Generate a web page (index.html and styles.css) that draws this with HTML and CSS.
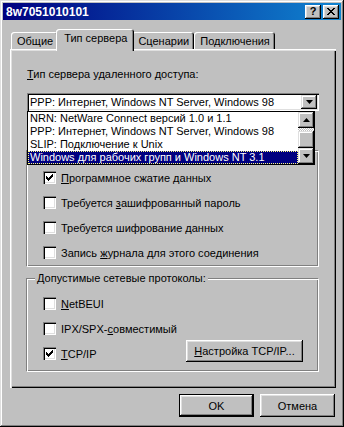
FILE: index.html
```html
<!DOCTYPE html>
<html>

<head>
  <meta charset="utf-8">
  <meta name="viewport" content="width=device-width">
  <title>8w7051010101</title>
  <link rel="stylesheet" href="styles.css">
</head>

<body>
  <div class="window">
    <div class="titlebar">
      <span class="title">8w7051010101</span>
      <div class="tbtns">
        <div class="tbtn help">?</div>
        <div class="tbtn">
          <svg width="8" height="7" viewBox="0 0 8 7" shape-rendering="crispEdges">
            <path d="M0 0h2v1h-2z M6 0h2v1h-2z M1 1h2v1h-2z M5 1h2v1h-2z M2 2h4v1h-4z M3 3h2v1h-2z M2 4h4v1h-4z M1 5h2v1h-2z M5 5h2v1h-2z M0 6h2v1h-2z M6 6h2v1h-2z" fill="#000"/>
          </svg>
        </div>
      </div>
    </div>

    <div class="dialog">
      <div class="tabs">
        <div class="tab">Общие</div>
        <div class="tab active">Тип сервера</div>
        <div class="tab">Сценарии</div>
        <div class="tab">Подключения</div>
      </div>

      <div class="panel">
        <div class="label"><u>Т</u>ип сервера удаленного доступа:</div>

        <div class="combo-wrap">
          <div class="combo">
            <span class="combo-text">PPP: Интернет, Windows NT Server, Windows 98</span>
            <div class="sbtn drop">
              <svg width="7" height="4" viewBox="0 0 7 4"><polygon points="0,0 7,0 3.5,4" fill="#000"/></svg>
            </div>
          </div>

          <div class="list">
            <div class="items">
              <div class="item">NRN: NetWare Connect версий 1.0 и 1.1</div>
              <div class="item">PPP: Интернет, Windows NT Server, Windows 98</div>
              <div class="item">SLIP: Подключение к Unix</div>
              <div class="item selected">Windows для рабочих групп и Windows NT 3.1</div>
            </div>
            <div class="scrollbar">
              <div class="sbtn">
                <svg width="7" height="4" viewBox="0 0 7 4"><polygon points="0,4 7,4 3.5,0" fill="#000"/></svg>
              </div>
              <div class="track"></div>
              <div class="sbtn thumb"></div>
              <div class="sbtn">
                <svg width="7" height="4" viewBox="0 0 7 4"><polygon points="0,0 7,0 3.5,4" fill="#000"/></svg>
              </div>
            </div>
          </div>
        </div>

        <div class="group options">
          <div class="row">
            <span class="check on"></span>
            <span><u>П</u>рограммное сжатие данных</span>
          </div>
          <div class="row">
            <span class="check"></span>
            <span>Требуется <u>з</u>ашифрованный пароль</span>
          </div>
          <div class="row">
            <span class="check"></span>
            <span>Требуется шифрование данных</span>
          </div>
          <div class="row">
            <span class="check"></span>
            <span>Запись <u>ж</u>урнала для этого соединения</span>
          </div>
        </div>

        <fieldset class="group protocols">
          <legend>Допустимые сетевые протоколы:</legend>
          <div class="row">
            <span class="check"></span>
            <span><u>N</u>etBEUI</span>
          </div>
          <div class="row">
            <span class="check"></span>
            <span>IPX/SPX-<u>с</u>овместимый</span>
          </div>
          <div class="row">
            <span class="check on"></span>
            <span><u>T</u>CP/IP</span>
            <div class="button setup"><span><u>Н</u>астройка TCP/IP...</span></div>
          </div>
        </fieldset>
      </div>

      <div class="actions">
        <div class="button default">OK</div>
        <div class="button">Отмена</div>
      </div>
    </div>
  </div>

  <script>
    // checkmark glyph for every ticked box
    let mark = '<svg width="13" height="13" viewBox="0 0 13 13" shape-rendering="crispEdges"><path d="M9 3h1v1h-1z M8 4h2v1h-2z M3 5h1v1h-1z M7 5h3v1h-3z M3 6h2v1h-2z M6 6h3v1h-3z M3 7h5v1h-5z M4 8h3v1h-3z M5 9h1v1h-1z" fill="#000"/></svg>';
    for (let box of document.querySelectorAll('.check.on')) {
      box.innerHTML = mark;
    }
  </script>
</body>

</html>
```

FILE: styles.css
```css
* {
  box-sizing: border-box;
}

body {
  margin: 0;
  background-color: #c0c0c0;
  font-family: "Liberation Sans", Arial, sans-serif;
  font-size: 11px;
  color: #000;
}

u {
  text-decoration-thickness: 1px;
  text-underline-offset: 1px;
}

.window {
  width: 344px;
  height: 427px;
  padding: 3px;
  display: flex;
  flex-direction: column;
  background-color: #c0c0c0;
  box-shadow: inset -1px -1px #000, inset 1px 1px #dfdfdf, inset -2px -2px #808080, inset 2px 2px #fff;
}

.titlebar {
  height: 17px;
  padding: 0 2px 0 3px;
  display: flex;
  align-items: center;
  justify-content: space-between;
  background: linear-gradient(90deg, #000080, #1084d0);
}

.title {
  color: white;
  font-weight: bold;
  font-size: 12px;
}

.tbtns {
  display: flex;
  gap: 2px;
}

.tbtn {
  width: 16px;
  height: 14px;
  display: flex;
  align-items: center;
  justify-content: center;
  background-color: #c0c0c0;
  box-shadow: inset -1px -1px #000, inset 1px 1px #fff, inset -2px -2px #808080, inset 2px 2px #dfdfdf;
}

.tbtn.help {
  font-weight: bold;
  font-size: 11px;
  line-height: 14px;
  padding-bottom: 1px;
}

.dialog {
  flex-grow: 1;
  display: flex;
  flex-direction: column;
  padding: 0 5px 0 7px;
}

/* tab strip */
.tabs {
  margin-top: 9px;
  display: flex;
  align-items: flex-end;
  padding-left: 1px;
}

.tab {
  height: 17px;
  padding: 2px 5px 0 6px;
  border-radius: 3px 3px 0 0;
  line-height: 14px;
  white-space: nowrap;
  background-color: #c0c0c0;
  box-shadow: inset 1px 1px #fff, inset -1px 0 #000, inset -2px 0 #808080;
}

.tab.active {
  position: relative;
  z-index: 1;
  height: 22px;
  margin: 0 -2px -2px;
  padding: 2px 7px 0 8px;
}

.panel {
  height: 339px;
  padding: 19px 17px 0 16px;
  background-color: #c0c0c0;
  box-shadow: inset 1px 1px #fff, inset 2px 2px #dfdfdf, inset -1px -1px #000, inset -2px -2px #808080;
}

.label {
  line-height: 13px;
  margin-left: 1px;
}

/* combo box with its open list */
.combo-wrap {
  position: relative;
  margin: 12px 0 0 1px;
}

.combo {
  height: 18px;
  padding: 2px 2px 2px 3px;
  display: flex;
  align-items: center;
  justify-content: space-between;
  background-color: white;
  box-shadow: inset 1px 1px #808080, inset 2px 2px #000, inset -1px -1px #fff, inset -2px -2px #dfdfdf;
}

.combo-text {
  line-height: 13px;
}

.sbtn {
  width: 16px;
  height: 16px;
  display: flex;
  align-items: center;
  justify-content: center;
  background-color: #c0c0c0;
  box-shadow: inset -1px -1px #000, inset 1px 1px #dfdfdf, inset -2px -2px #808080, inset 2px 2px #fff;
}

.sbtn.drop {
  height: 14px;
}

.list {
  position: absolute;
  top: 100%;
  left: 0;
  width: 288px;
  z-index: 2;
  display: flex;
  border: 1px solid #000;
  background-color: white;
}

.items {
  flex-grow: 1;
}

.item {
  height: 13px;
  line-height: 13px;
  padding-left: 2px;
  white-space: nowrap;
}

.item.selected {
  background-color: #000080;
  color: white;
  outline: 1px dotted #ffff80;
  outline-offset: -1px;
}

.scrollbar {
  width: 16px;
  display: flex;
  flex-direction: column;
}

.track {
  height: 3px;
  background: repeating-conic-gradient(#c0c0c0 0 25%, #fff 0 50%) 0 0 / 2px 2px;
}

.sbtn.thumb {
  height: 17px;
}

/* group boxes */
.group {
  margin: 0;
  border: 1px solid;
  border-color: #808080 #fff #fff #808080;
  box-shadow: inset 1px 1px #fff, inset -1px -1px #808080;
}

.options {
  margin-top: 39px;
  padding: 14px 0 1px 0;
}

.protocols {
  margin-top: 5px;
  padding: 6px 15px 5px 0;
}

legend {
  margin-left: 8px;
  padding: 0 2px;
  line-height: 13px;
  background-color: #c0c0c0;
}

.row {
  height: 25px;
  display: flex;
  align-items: center;
  gap: 5px;
  padding-left: 16px;
  white-space: nowrap;
}

.check {
  width: 13px;
  height: 13px;
  display: flex;
  background-color: white;
  box-shadow: inset 1px 1px #808080, inset 2px 2px #000, inset -1px -1px #fff, inset -2px -2px #dfdfdf;
}

/* push buttons */
.button {
  height: 23px;
  display: flex;
  align-items: center;
  justify-content: center;
  background-color: #c0c0c0;
  box-shadow: inset -1px -1px #000, inset 1px 1px #fff, inset -2px -2px #808080, inset 2px 2px #dfdfdf;
}

.button.setup {
  width: 117px;
  height: 22px;
  margin-left: auto;
  margin-bottom: 6px;
}

.button.default {
  box-shadow: inset 0 0 0 1px #000, inset -2px -2px #000, inset 2px 2px #fff, inset -3px -3px #808080, inset 3px 3px #dfdfdf;
}

.actions {
  margin-top: 6px;
  padding-right: 1px;
  display: flex;
  justify-content: flex-end;
  gap: 6px;
}

.actions .button {
  width: 75px;
}
```
